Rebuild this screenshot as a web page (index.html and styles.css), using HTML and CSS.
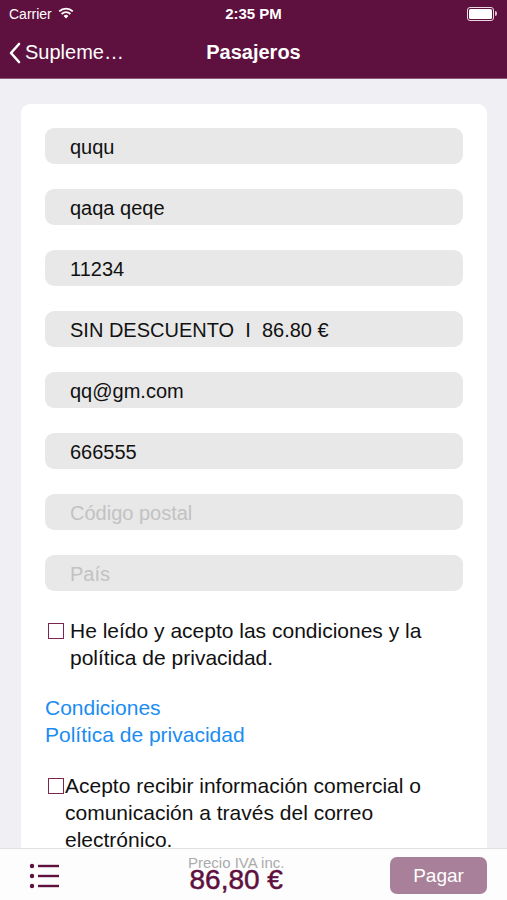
FILE: index.html
```html
<!DOCTYPE html>
<html lang="es">
<head>
  <meta charset="UTF-8">
  <title>Pasajeros</title>
  <link rel="stylesheet" href="styles.css">
</head>
<body>
  <header class="topbar">
    <div class="status">
      <div class="status-left">
        <span>Carrier</span>
        <svg class="wifi" width="16" height="12" viewBox="0 0 16 12">
          <path d="M8 11.5 L5.6 9 A3.4 3.4 0 0 1 10.4 9 Z" fill="#fff"/>
          <path d="M3.6 7 A6.2 6.2 0 0 1 12.4 7" stroke="#fff" stroke-width="1.8" fill="none"/>
          <path d="M1.2 4.4 A9.6 9.6 0 0 1 14.8 4.4" stroke="#fff" stroke-width="1.8" fill="none"/>
        </svg>
      </div>
      <div class="time">2:35 PM</div>
      <div class="status-right">
        <span class="battery"><span class="battery-level"></span></span>
        <span class="battery-nub"></span>
      </div>
    </div>
    <nav class="navbar">
      <a class="back">
        <svg width="14" height="22" viewBox="0 0 14 22">
          <path d="M11 2 L3 11 L11 20" stroke="#fff" stroke-width="2.6" fill="none" stroke-linecap="round" stroke-linejoin="round"/>
        </svg>
        <span>Supleme…</span>
      </a>
      <h1>Pasajeros</h1>
      <span></span>
    </nav>
  </header>

  <main class="content">
    <div class="card">
      <div class="field">ququ</div>
      <div class="field">qaqa qeqe</div>
      <div class="field">11234</div>
      <div class="field">SIN DESCUENTO&nbsp; I &nbsp;86.80 €</div>
      <div class="field">qq@gm.com</div>
      <div class="field">666555</div>
      <div class="field placeholder">Código postal</div>
      <div class="field placeholder">País</div>

      <label class="check first">
        <span class="box"></span>
        <span class="check-text">He leído y acepto las condiciones y la<br>política de privacidad.</span>
      </label>

      <div class="links">
        <a>Condiciones</a>
        <a>Política de privacidad</a>
      </div>

      <label class="check second">
        <span class="box"></span>
        <span class="check-text">Acepto recibir información comercial o<br>comunicación a través del correo<br>electrónico.</span>
      </label>
    </div>
  </main>

  <footer class="bottombar">
    <svg class="menu" width="32" height="26" viewBox="0 0 32 26">
      <circle cx="3" cy="3" r="2.2" fill="#5e103e"/>
      <circle cx="3" cy="13" r="2.2" fill="#5e103e"/>
      <circle cx="3" cy="23" r="2.2" fill="#5e103e"/>
      <rect x="9" y="1.8" width="21" height="2.4" fill="#5e103e"/>
      <rect x="9" y="11.8" width="21" height="2.4" fill="#5e103e"/>
      <rect x="9" y="21.8" width="21" height="2.4" fill="#5e103e"/>
    </svg>
    <div class="price">
      <span class="price-label">Precio IVA inc.</span>
      <span class="price-value">86,80 €</span>
    </div>
    <button class="pay">Pagar</button>
  </footer>
</body>
</html>
```

FILE: styles.css
```css
html, body {
  margin: 0;
  padding: 0;
}
body {
  width: 507px;
  height: 900px;
  overflow: hidden;
  display: flex;
  flex-direction: column;
  font-family: "Liberation Sans", Arial, sans-serif;
  background-color: #efeff4;
  color: #111;
}
.topbar {
  background-color: #5e103e;
  color: white;
  height: 78px;
  border-bottom: 1px solid #8a5a78;
  flex-shrink: 0;
}
.status {
  height: 27px;
  display: grid;
  grid-template-columns: 1fr auto 1fr;
  align-items: center;
  padding: 0 9px;
  font-size: 14px;
}
.status-left {
  display: flex;
  align-items: center;
  gap: 6px;
}
.wifi {
  margin-top: -2px;
}
.time {
  font-weight: bold;
  font-size: 15px;
}
.status-right {
  display: flex;
  justify-content: flex-end;
  align-items: center;
  padding-right: 1px;
}
.battery {
  width: 23px;
  height: 10px;
  border: 1.5px solid #e9d7e2;
  border-radius: 3px;
  padding: 1px;
  box-sizing: content-box;
  display: flex;
}
.battery-level {
  flex: 1;
  background: white;
  border-radius: 1.5px;
}
.battery-nub {
  width: 2px;
  height: 5px;
  background: #d8bfcf;
  border-radius: 0 2px 2px 0;
  margin-left: 1px;
}
.navbar {
  height: 51px;
  display: grid;
  grid-template-columns: 1fr auto 1fr;
  align-items: center;
  padding: 0 8px;
}
.navbar h1 {
  margin: 0;
  font-size: 20px;
  font-weight: bold;
}
.back {
  display: flex;
  align-items: center;
  gap: 3px;
  font-size: 20px;
}
.back svg {
  margin-top: 1px;
}
.content {
  flex: 1;
  overflow: hidden;
  padding: 25px 20px 0 21px;
}
.card {
  background: white;
  border-radius: 9px;
  padding: 24px 24px 40px;
}
.field {
  height: 36px;
  line-height: 38px;
  background: #e8e8e8;
  border-radius: 9px;
  padding-left: 25px;
  font-size: 20px;
  margin-bottom: 25px;
}
.field.placeholder {
  color: #c2c2c2;
}
.check {
  display: flex;
  align-items: flex-start;
  font-size: 21px;
  line-height: 27px;
  margin-left: 3px;
}
.check.first {
  margin-top: 26px;
  gap: 6px;
}
.check.second {
  gap: 1px;
}
.box {
  width: 14px;
  height: 14px;
  border: 1.5px solid #7a2850;
  flex-shrink: 0;
  margin-top: 6px;
}
.links {
  display: flex;
  flex-direction: column;
  margin: 23px 0 24px;
  font-size: 21px;
  line-height: 27px;
}
.links a {
  color: #1a8cf2;
}
.bottombar {
  height: 51px;
  flex-shrink: 0;
  background: #fdfdfd;
  border-top: 1px solid #e2e2e2;
  display: flex;
  align-items: center;
  padding: 0 20px 0 29px;
}
.menu {
  margin-top: 2px;
}
.price {
  display: flex;
  flex-direction: column;
  align-items: center;
  align-self: flex-start;
  margin: 7px 0 0 127px;
}
.price-label {
  color: #ababab;
  font-size: 15px;
  line-height: 14px;
}
.price-value {
  color: #5e103e;
  font-size: 28px;
  line-height: 24px;
  margin-top: -2px;
  -webkit-text-stroke: 0.5px #5e103e;
}
.pay {
  margin-left: auto;
  width: 97px;
  height: 37px;
  border: none;
  border-radius: 7px;
  background-color: #a98099;
  color: white;
  font-family: "Liberation Sans", Arial, sans-serif;
  font-size: 19px;
  margin-top: 2px;
}
```
